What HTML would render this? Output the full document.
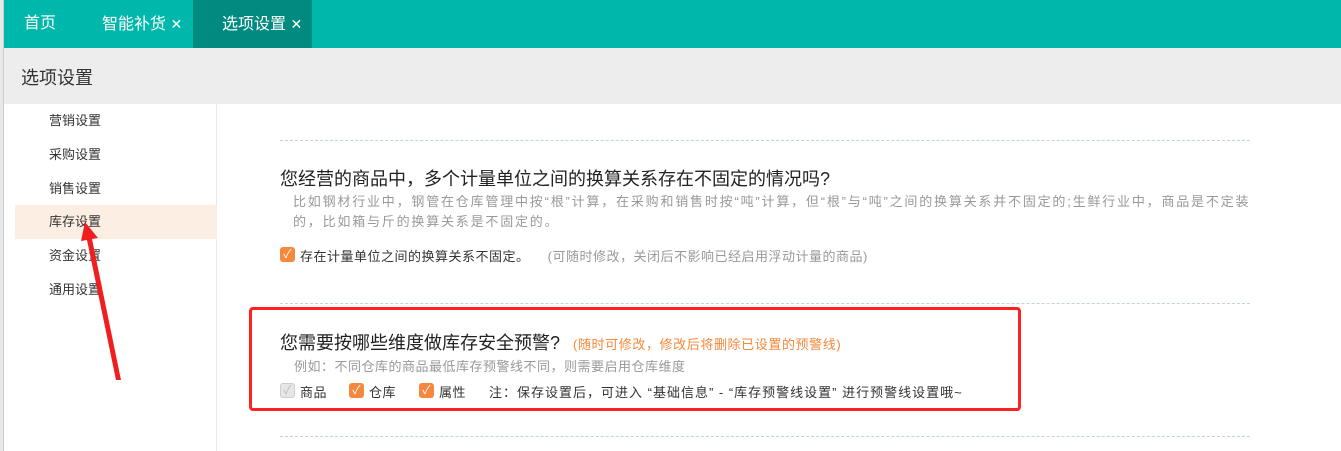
<!DOCTYPE html>
<html><head><meta charset="utf-8"><style>
*{margin:0;padding:0;box-sizing:border-box}
body{width:1341px;height:451px;overflow:hidden;background:#fff;font-family:"Liberation Sans","Noto Sans CJK SC",sans-serif;position:relative}
.top{position:absolute;left:0;top:0;width:1341px;height:48px;background:#00b7ab}
.lstrip{position:absolute;left:0;top:0;width:4px;height:451px;background:#e8e8e8;border-right:1px solid #ccc}
.tab{position:absolute;top:0;height:48px;line-height:48px;color:#fff;font-size:16px}
.hdr{position:absolute;left:4px;top:48px;width:1337px;height:56px;background:#ededed}
.hdr span{position:absolute;left:17px;top:16px;font-size:18px;color:#333}
.side{position:absolute;left:15px;top:104px;width:202px;height:347px;background:#fff;border-right:1px solid #e8e8e8}
.si{position:absolute;left:0;width:202px;height:34px;line-height:34px;padding-left:34px;font-size:13px;color:#333}
.t{position:absolute;white-space:nowrap;letter-spacing:0.5px}
.dash{position:absolute;left:280px;width:970px;border-top:1px dashed #c4d4d0}
.cb{position:absolute;width:15px;height:15px;border-radius:3px;background:#f6883d;color:#fff;font-size:12px;line-height:15px;text-align:center;letter-spacing:0}
.cb.g{background:#e6e6e6;border:1px solid #ccc;color:#bbb;line-height:13px}
</style></head><body>
<div class="top"></div>
<div class="tab" style="left:24px">首页</div>
<div class="tab" style="left:102px">智能补货 <span style="font-size:14px">✕</span></div>
<div class="tab" style="left:193px;width:119px;background:#008a80;padding-left:29px">选项设置 <span style="font-size:14px">✕</span></div>
<div class="hdr"><span>选项设置</span></div>
<div class="lstrip"></div>
<div class="side">
<div class="si" style="top:0">营销设置</div>
<div class="si" style="top:34px">采购设置</div>
<div class="si" style="top:68px">销售设置</div>
<div class="si" style="top:101px;background:#fdeee4">库存设置</div>
<div class="si" style="top:135px">资金设置</div>
<div class="si" style="top:169px">通用设置</div>
</div>
<div class="dash" style="top:140px"></div>
<div class="t" style="left:280px;top:165px;font-size:18px;color:#222;letter-spacing:0">您经营的商品中，多个计量单位之间的换算关系存在不固定的情况吗?</div>
<div class="t" style="left:293px;top:192px;font-size:13px;color:#999;line-height:20px;letter-spacing:1.8px">比如钢材行业中，钢管在仓库管理中按“根”计算，在采购和销售时按“吨”计算，但“根”与“吨”之间的换算关系并不固定的;生鲜行业中，商品是不定装<br>的，比如箱与斤的换算关系是不固定的。</div>
<div class="cb" style="left:280px;top:247px">✓</div>
<div class="t" style="left:300px;top:246px;font-size:13px;color:#333">存在计量单位之间的换算关系不固定。 <span style="color:#999;margin-left:14px">(可随时修改，关闭后不影响已经启用浮动计量的商品)</span></div>
<div class="dash" style="top:303px"></div>
<div style="position:absolute;left:249px;top:307px;width:772px;height:104px;border:3px solid #f22;border-radius:4px"></div>
<div class="t" style="left:280px;top:329px;font-size:18px;color:#222;letter-spacing:0">您需要按哪些维度做库存安全预警? <span style="font-size:13px;color:#f6883d;margin-left:8px;letter-spacing:0.6px">(随时可修改，修改后将删除已设置的预警线)</span></div>
<div class="t" style="left:294px;top:356px;font-size:13px;color:#999">例如：不同仓库的商品最低库存预警线不同，则需要启用仓库维度</div>
<div class="cb g" style="left:280px;top:383px">✓</div>
<div class="t" style="left:300px;top:382px;font-size:13px;color:#333">商品</div>
<div class="cb" style="left:349px;top:383px">✓</div>
<div class="t" style="left:369px;top:382px;font-size:13px;color:#333">仓库</div>
<div class="cb" style="left:419px;top:383px">✓</div>
<div class="t" style="left:439px;top:382px;font-size:13px;color:#333">属性</div>
<div class="t" style="left:489px;top:382px;font-size:13px;color:#333;letter-spacing:1px">注：保存设置后，可进入 “基础信息” - “库存预警线设置” 进行预警线设置哦~</div>
<div class="dash" style="top:436px"></div>
<svg style="position:absolute;left:0;top:0" width="1341" height="451"><polygon points="85,222 98,238 92,239 121,380 116,380 87,240 81,241" fill="#f01e1e"/></svg>
</body></html>
